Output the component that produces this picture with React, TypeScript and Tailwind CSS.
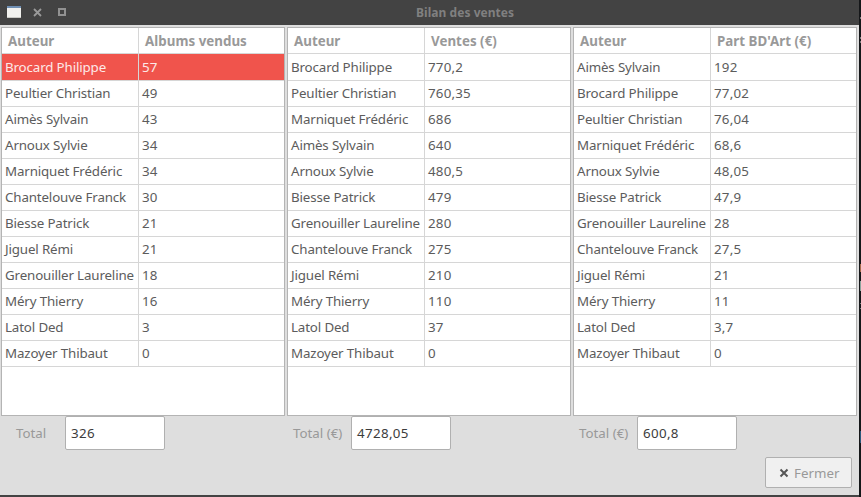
type Row = [string, string];

const panels: {
  title: string;
  total: string;
  totalLabel: string;
  labelClass: string;
  selected?: number;
  rows: Row[];
}[] = [
  {
    title: "Albums vendus",
    total: "326",
    totalLabel: "Total",
    labelClass: "w-[64px] pl-[15px]",
    selected: 0,
    rows: [
      ["Brocard Philippe", "57"],
      ["Peultier Christian", "49"],
      ["Aimès Sylvain", "43"],
      ["Arnoux Sylvie", "34"],
      ["Marniquet Frédéric", "34"],
      ["Chantelouve Franck", "30"],
      ["Biesse Patrick", "21"],
      ["Jiguel Rémi", "21"],
      ["Grenouiller Laureline", "18"],
      ["Méry Thierry", "16"],
      ["Latol Ded", "3"],
      ["Mazoyer Thibaut", "0"],
    ],
  },
  {
    title: "Ventes (€)",
    total: "4728,05",
    totalLabel: "Total (€)",
    labelClass: "w-[64px] pl-[6px]",
    rows: [
      ["Brocard Philippe", "770,2"],
      ["Peultier Christian", "760,35"],
      ["Marniquet Frédéric", "686"],
      ["Aimès Sylvain", "640"],
      ["Arnoux Sylvie", "480,5"],
      ["Biesse Patrick", "479"],
      ["Grenouiller Laureline", "280"],
      ["Chantelouve Franck", "275"],
      ["Jiguel Rémi", "210"],
      ["Méry Thierry", "110"],
      ["Latol Ded", "37"],
      ["Mazoyer Thibaut", "0"],
    ],
  },
  {
    title: "Part BD'Art (€)",
    total: "600,8",
    totalLabel: "Total (€)",
    labelClass: "w-[64px] pl-[6px]",
    rows: [
      ["Aimès Sylvain", "192"],
      ["Brocard Philippe", "77,02"],
      ["Peultier Christian", "76,04"],
      ["Marniquet Frédéric", "68,6"],
      ["Arnoux Sylvie", "48,05"],
      ["Biesse Patrick", "47,9"],
      ["Grenouiller Laureline", "28"],
      ["Chantelouve Franck", "27,5"],
      ["Jiguel Rémi", "21"],
      ["Méry Thierry", "11"],
      ["Latol Ded", "3,7"],
      ["Mazoyer Thibaut", "0"],
    ],
  },
];

function TitleBar() {
  return (
    <header className="flex h-[25px] shrink-0 items-center bg-[#434343] pl-[7px]">
      <svg width="14" height="12" viewBox="0 0 14 12" className="-mt-px">
        <rect width="14" height="12" fill="#f1f1ee" />
        <rect width="14" height="2" fill="#6f8fb3" />
        <rect y="11" width="14" height="1" fill="#c9c9c5" />
      </svg>
      <svg width="9" height="9" viewBox="0 0 9 9" className="ml-[12px] -mt-px">
        <path d="M1 1L8 8M8 1L1 8" stroke="#9a9a9a" strokeWidth="1.8" />
      </svg>
      <svg width="8" height="8" viewBox="0 0 8 8" className="ml-[16px] -mt-px">
        <rect x="1" y="1" width="6" height="6" fill="none" stroke="#929292" strokeWidth="2" />
      </svg>
      <h1 className="ml-[350px] text-[12px] leading-[24px] font-bold tracking-[0.05px] text-[#808080]">
        Bilan des ventes
      </h1>
    </header>
  );
}

function Table({ panel }: { panel: (typeof panels)[number] }) {
  return (
    <div className="h-[389px] border border-[#b4b4b4] bg-white">
      <div className="flex h-[26px] border-b border-[#d6d6d6] font-bold text-[#999]">
        <div className="w-[137px] border-r border-[#d6d6d6] pl-[6px] leading-[26px]">Auteur</div>
        <div className="pl-[6px] leading-[26px] tracking-[0.03px]">{panel.title}</div>
      </div>
      {panel.rows.map(([name, value], i) => (
        <div
          key={name}
          className={
            (i === 0 ? "h-[27px] leading-[26px] " : "h-[26px] leading-[24px] ") +
            (i === panel.selected ? "bg-[#f0544c] bg-clip-padding text-[#fde9e8] " : "text-[#5c5c5c] ") +
            "flex border-b border-[#d6d6d6]"
          }
        >
          <div className="w-[137px] border-r border-[#d6d6d6] pl-[3px] tracking-[-0.14px] whitespace-nowrap">
            {name}
          </div>
          <div className="pl-[3px] tracking-[0.2px]">{value}</div>
        </div>
      ))}
    </div>
  );
}

/* Sliver of the desktop that shows past the window's right edge. */
function DesktopEdge() {
  return (
    <div className="flex w-px flex-col">
      <div className="mt-[17px] h-[2px] bg-[#777]" />
      <div className="mt-[18px] h-[2px] bg-[#777]" />
      <div className="mt-[2px] h-[2px] bg-[#777]" />
      <div className="mt-[221px] h-[8px] bg-[#a5694a]" />
      <div className="mt-[9px] h-[10px] bg-[#8ba39b]" />
      <div className="mt-[12px] h-px bg-[#777]" />
      <div className="mt-[4px] h-px bg-[#777]" />
      <div className="mt-[122px] h-[12px] bg-[#2c597b]" />
    </div>
  );
}

export default function App() {
  return (
    <div className="flex h-[497px] w-[861px] overflow-hidden bg-[#151719] font-['Noto_Sans',sans-serif] text-[13.333px]">
      <div className="mr-px flex w-[859px] flex-col border-b-2 border-[#434343] bg-[#dedede]">
        <TitleBar />
        <main className="flex gap-[2px] pt-[2px] pl-px">
          {panels.map((panel) => (
            <section key={panel.title} className="w-[284px]">
              <Table panel={panel} />
              <div className="flex h-[34px] leading-[35px]">
                <span className={panel.labelClass + " text-[#999]"}>{panel.totalLabel}</span>
                <div className="h-[34px] w-[100px] rounded-[2px] border border-[#b0b0b0] bg-white pl-[5px] leading-[33px] tracking-[0.35px] text-[#3c3c3c]">
                  {panel.total}
                </div>
              </div>
            </section>
          ))}
        </main>
        <footer className="mt-[7px] flex justify-end pr-[7px]">
          <button className="flex h-[31px] w-[87px] items-center rounded-[2px] border border-[#b0b0b0] bg-[#f0f0f0] pl-[13px] text-[#999]">
            <svg width="10" height="10" viewBox="0 0 10 10">
              <path d="M1.5 1.5L8.5 8.5M8.5 1.5L1.5 8.5" stroke="#555" strokeWidth="2" />
            </svg>
            <span className="ml-[5px] pt-[2px]">Fermer</span>
          </button>
        </footer>
      </div>
      <DesktopEdge />
    </div>
  );
}
